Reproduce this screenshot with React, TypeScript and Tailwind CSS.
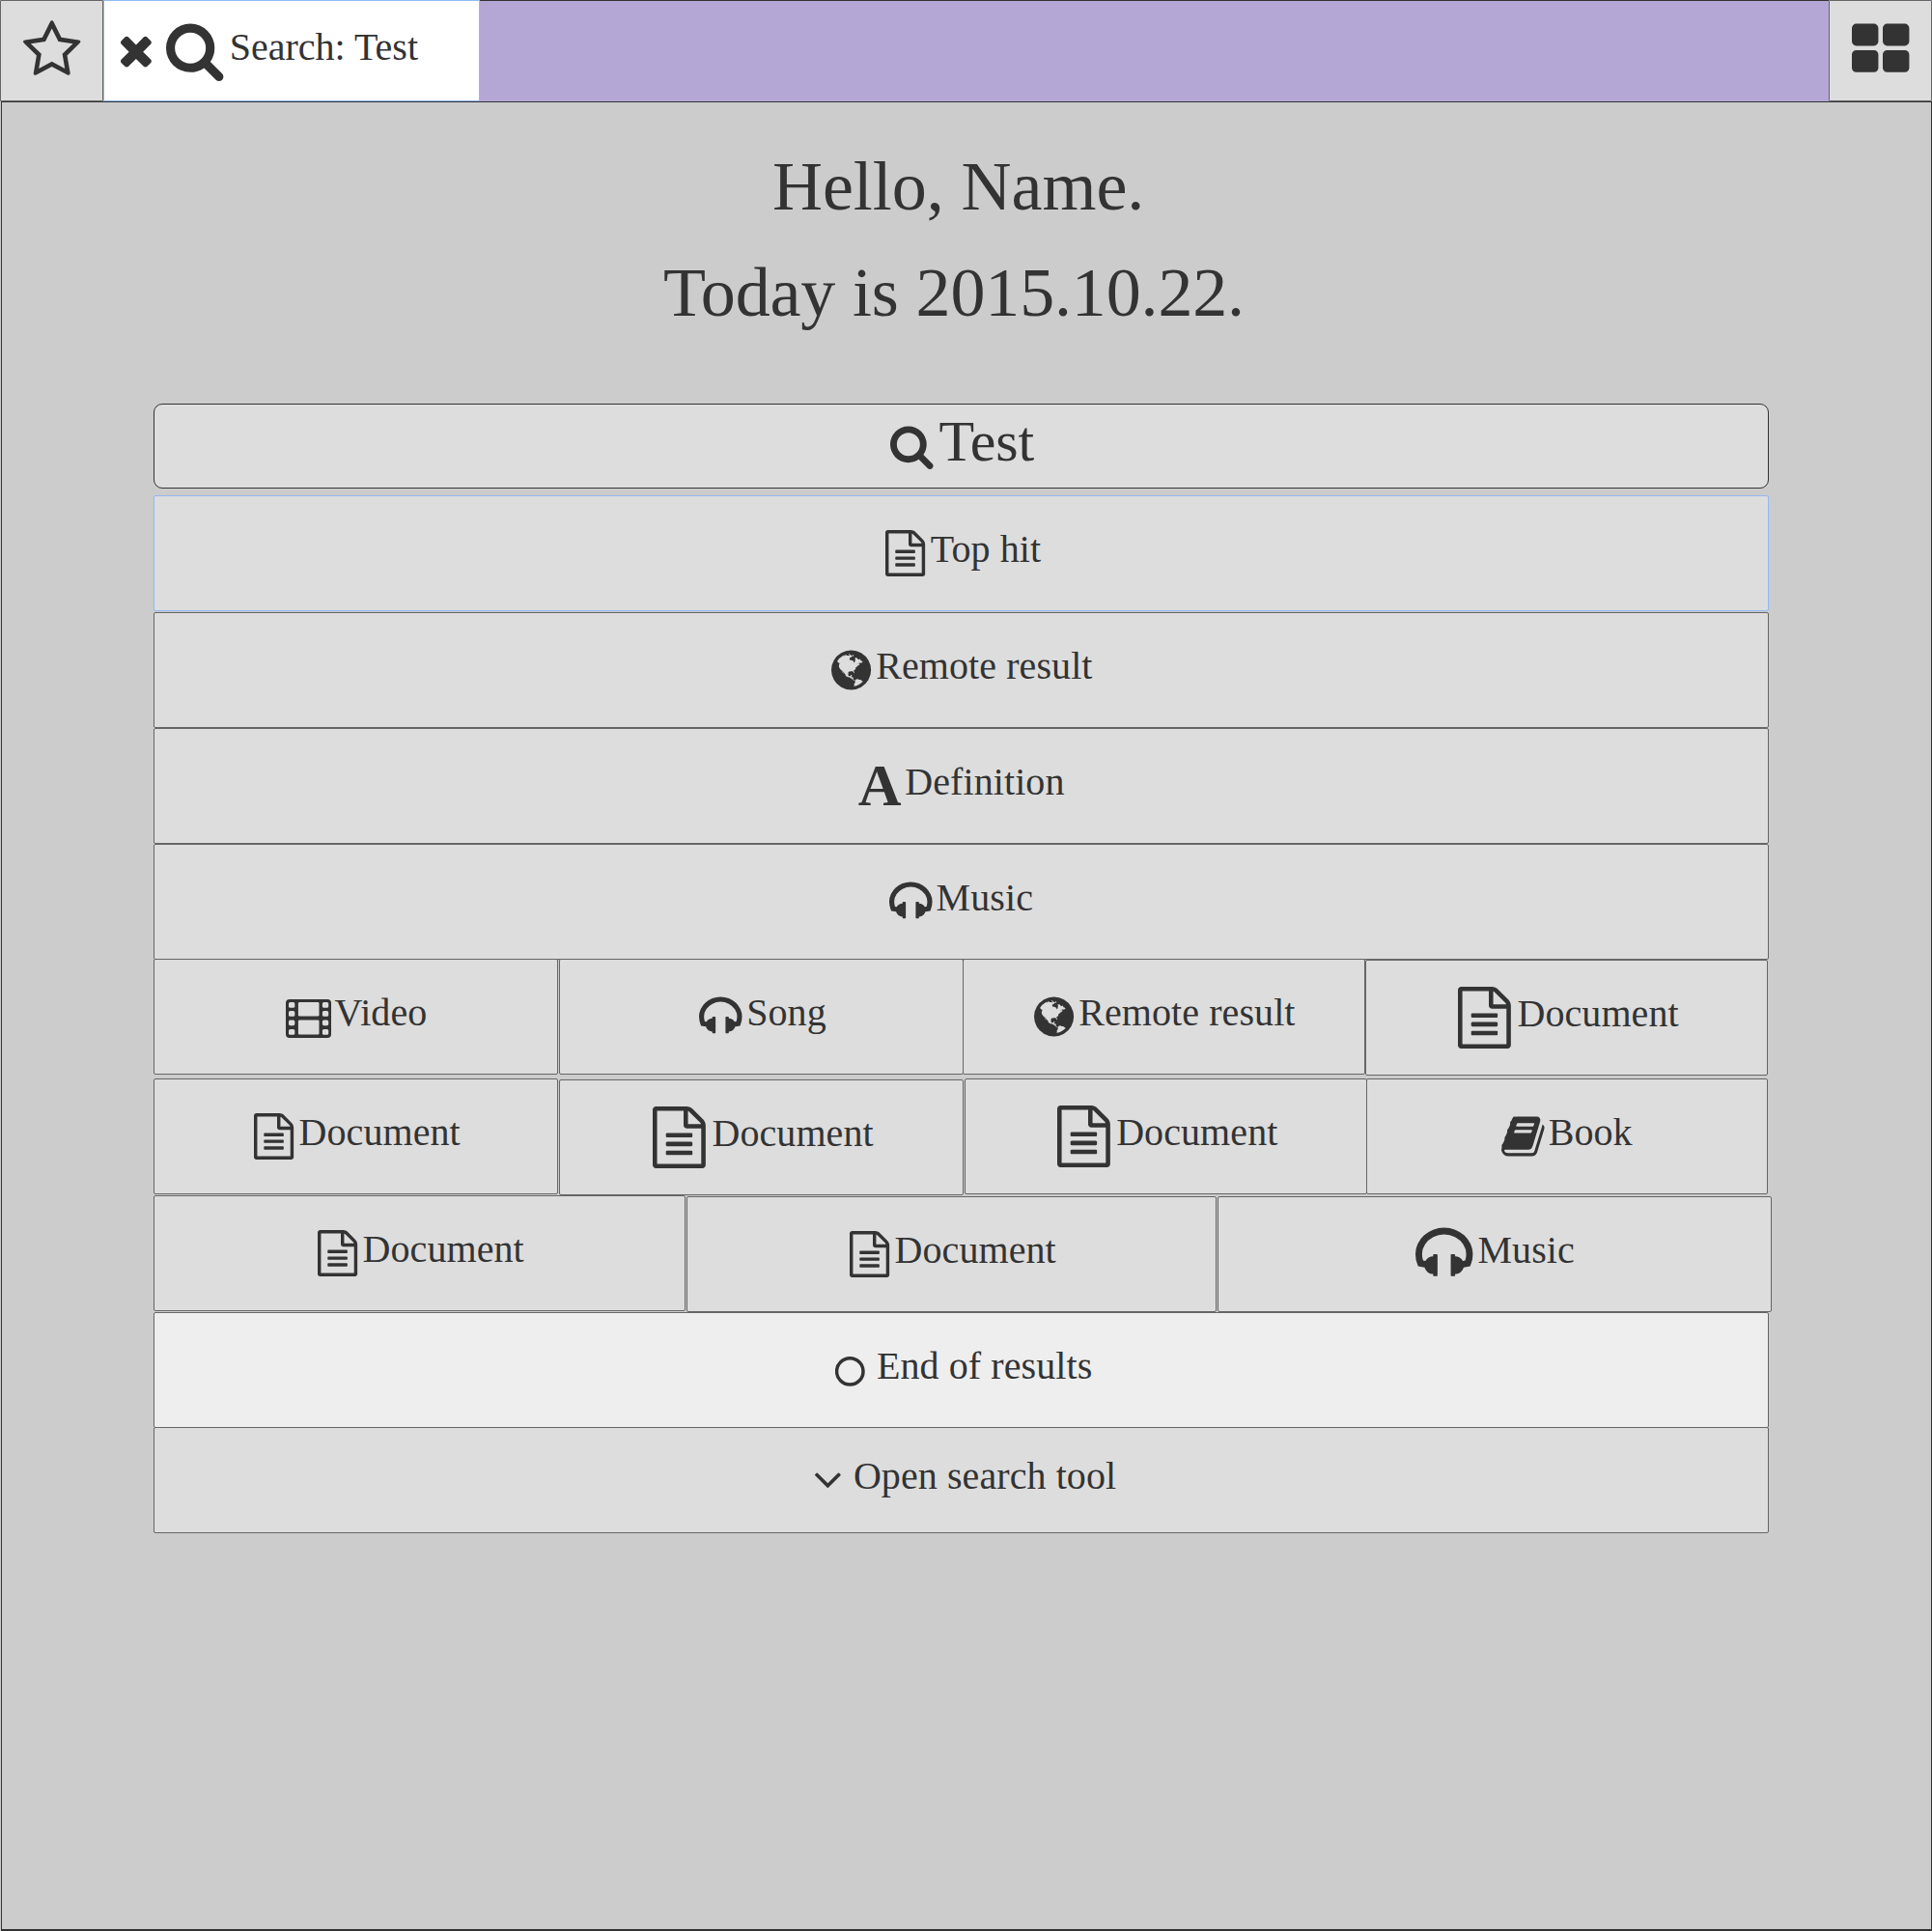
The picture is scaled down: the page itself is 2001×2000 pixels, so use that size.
import type { ReactNode } from "react";

type Glyph = { x: number; w: number; d: string };

const glyphs = {
  star: {
    x: 64,
    w: 1664,
    d: "M1201 1004l306-297-422-62-189-382-189 382-422 62 306 297-73 421 378-199 377 199zm527-357q0 22-26 48l-363 354 86 500q1 7 1 20 0 50-41 50-19 0-40-12l-449-236-449 236q-22 12-40 12-21 0-31.5-14.5t-10.5-35.5q0-6 2-20l86-500-364-354q-25-27-25-48 0-37 56-46l502-73 225-455q19-41 49-41t49 41l225 455 502 73q56 9 56 46z",
  },
  times: {
    x: 302,
    w: 1188,
    d: "M1490 1322q0 40-28 68l-136 136q-28 28-68 28t-68-28l-294-294-294 294q-28 28-68 28t-68-28l-136-136q-28-28-28-68t28-68l294-294-294-294q-28-28-28-68t28-68l136-136q28-28 68-28t68 28l294 294 294-294q28-28 68-28t68 28l136 136q28 28 28 68t-28 68l-294 294 294 294q28 28 28 68z",
  },
  search: {
    x: 64,
    w: 1664,
    d: "M1216 832q0-185-131.5-316.5t-316.5-131.5-316.5 131.5-131.5 316.5 131.5 316.5 316.5 131.5 316.5-131.5 131.5-316.5zm512 832q0 52-38 90t-90 38q-54 0-90-38l-343-342q-179 124-399 124-143 0-273.5-55.5t-225-150-150-225-55.5-273.5 55.5-273.5 150-225 225-150 273.5-55.5 273.5 55.5 225 150 150 225 55.5 273.5q0 220-124 399l343 343q37 37 37 90z",
  },
  tiles: {
    x: 64,
    w: 1664,
    d: "M832 1024v384q0 52-38 90t-90 38h-512q-52 0-90-38t-38-90v-384q0-52 38-90t90-38h512q52 0 90 38t38 90zm0-768v384q0 52-38 90t-90 38h-512q-52 0-90-38t-38-90v-384q0-52 38-90t90-38h512q52 0 90 38t38 90zm896 768v384q0 52-38 90t-90 38h-512q-52 0-90-38t-38-90v-384q0-52 38-90t90-38h512q52 0 90 38t38 90zm0-768v384q0 52-38 90t-90 38h-512q-52 0-90-38t-38-90v-384q0-52 38-90t90-38h512q52 0 90 38t38 90z",
  },
  doc: {
    x: 128,
    w: 1536,
    d: "M1596 380q28 28 48 76t20 88v1152q0 40-28 68t-68 28h-1344q-40 0-68-28t-28-68v-1600q0-40 28-68t68-28h896q40 0 88 20t76 48zm-444-244v376h376q-10-29-22-41l-313-313q-12-12-41-22zm384 1528v-1024h-416q-40 0-68-28t-28-68v-416h-768v1536h1280zm-1024-864q0-14 9-23t23-9h704q14 0 23 9t9 23v64q0 14-9 23t-23 9h-704q-14 0-23-9t-9-23v-64zm736 224q14 0 23 9t9 23v64q0 14-9 23t-23 9h-704q-14 0-23-9t-9-23v-64q0-14 9-23t23-9h704zm0 256q14 0 23 9t9 23v64q0 14-9 23t-23 9h-704q-14 0-23-9t-9-23v-64q0-14 9-23t23-9h704z",
  },
  headphones: {
    x: 64,
    w: 1664,
    d: "M1728 886q0 166-60 314l-20 49-185 33q-22 83-90.5 136.5t-156.5 53.5v32q0 14-9 23t-23 9h-64q-14 0-23-9t-9-23v-576q0-14 9-23t23-9h64q14 0 23 9t9 23v32q71 0 130 35.5t93 95.5l68-12q29-95 29-193 0-148-88-279t-236.5-209-315.5-78-315.5 78-236.5 209-88 279q0 98 29 193l68 12q34-60 93-95.5t130-35.5v-32q0-14 9-23t23-9h64q14 0 23 9t9 23v576q0 14-9 23t-23 9h-64q-14 0-23-9t-9-23v-32q-88 0-156.5-53.5t-90.5-136.5l-185-33-20-49q-60-148-60-314 0-151 67-291t179-242.5 266-163.5 320-61 320 61 266 163.5 179 242.5 67 291z",
  },
  book: {
    x: 63,
    w: 1667,
    d: "M1703 478q40 57 18 129l-275 906q-19 64-76.5 107.5t-122.5 43.5h-923q-77 0-148.5-53.5t-99.5-131.5q-24-67-2-127 0-4 3-27t4-37q1-8-3-21.5t-3-19.5q2-11 8-21t16.5-23.5 16.5-23.5q23-38 45-91.5t30-91.5q3-10 .5-30t-.5-28q3-11 17-28t17-23q21-36 42-92t25-90q1-9-2.5-32t.5-28q4-13 22-30.5t22-22.5q19-26 42.5-84.5t27.5-96.5q1-8-3-25.5t-2-26.5q2-8 9-18t18-23 17-21q8-12 16.5-30.5t15-35 16-36 19.5-32 26.5-23.5 36-11.5 47.5 5.5l-1 3q38-9 51-9h761q74 0 114 56t18 130l-274 906q-36 119-71.5 153.5t-128.5 34.5h-869q-27 0-38 15-11 16-1 43 24 70 144 70h923q29 0 56-15.5t35-41.5l300-987q7-22 5-57 38 15 59 43zm-1064 2q-4 13 2 22.5t20 9.5h608q13 0 25.5-9.5t16.5-22.5l21-64q4-13-2-22.5t-20-9.5h-608q-13 0-25.5 9.5t-16.5 22.5zm-83 256q-4 13 2 22.5t20 9.5h608q13 0 25.5-9.5t16.5-22.5l21-64q4-13-2-22.5t-20-9.5h-608q-13 0-25.5 9.5t-16.5 22.5z",
  },
  chevron: {
    x: 397,
    w: 998,
    d: "M1395 736q0 13-10 23l-466 466q-10 10-23 10t-23-10l-466-466q-10-10-10-23t10-23l50-50q10-10 23-10t23 10l393 393 393-393q10-10 23-10t23 10l50 50q10 10 10 23z",
  },
  globe: {
    x: 128,
    w: 1536,
    d: "M896 128q209 0 385.5 103t279.5 279.5 103 385.5-103 385.5-279.5 279.5-385.5 103-385.5-103-279.5-279.5-103-385.5 103-385.5 279.5-279.5 385.5-103zm274 521q-2 1-9.5 9.5t-13.5 9.5q2 0 4.5-5t5-11 3.5-7q6-7 22-15 14-6 52-12 34-8 51 11-2-2 9.5-13t14.5-12q3-2 15-4.5t15-7.5l2-22q-12 1-17.5-7t-6.5-21q0 2-6 8 0-7-4.5-8t-11.5 1-9 1q-10-3-15-7.5t-8-16.5-4-15q-2-5-9.5-11t-9.5-10q-1-2-2.5-5.5t-3-6.5-4-5.5-5.5-2.5-7 5-7.5 10-4.5 5q-3-2-6-1.5t-4.5 1-4.5 3-5 3.5q-3 2-8.5 3t-8.5 2q15-5-1-11-10-4-16-3 9-4 7.5-12t-8.5-14h5q-1-4-8.5-8.5t-17.5-8.5-13-6q-8-5-34-9.5t-33-.5q-5 6-4.5 10.5t4 14 3.5 12.5q1 6-5.5 13t-6.5 12q0 7 14 15.5t10 21.5q-3 8-16 16t-16 12q-5 8-1.5 18.5t10.5 16.5q2 2 1.5 4t-3.5 4.5-5.5 4-6.5 3.5l-3 2q-11 5-20.5-6t-13.5-26q-7-25-16-30-23-8-29 1-5-13-41-26-25-9-58-4 6-1 0-15-7-15-19-12 3-6 4-17.5t1-13.5q3-13 12-23 1-1 7-8.5t9.5-13.5.5-6q35 4 50-11 5-5 11.5-17t10.5-17q9-6 14-5.5t14.5 5.5 14.5 5q14 1 15.5-11t-7.5-20q12 1 3-17-4-7-8-9-12-4-27 5-8 4 2 8-1-1-9.5 10.5t-16.5 17.5-16-5q-1-1-5.5-13.5t-9.5-13.5q-8 0-16 15 3-8-11-15t-24-8q19-12-8-27-7-4-20.5-5t-19.5 4q-5 7-5.5 11.5t5 8 10.5 5.5 11.5 4 8.5 3q14 10 8 14-2 1-8.5 3.5t-11.5 4.5-6 4q-3 4 0 14t-2 14q-5-5-9-17.5t-7-16.5q7 9-25 6l-10-1q-4 0-16 2t-20.5 1-13.5-8q-4-8 0-20 1-4 4-2-4-3-11-9.5t-10-8.5q-46 15-94 41 6 1 12-1 5-2 13-6.5t10-5.5q34-14 42-7l5-5q14 16 20 25-7-4-30-1-20 6-22 12 7 12 5 18-4-3-11.5-10t-14.5-11-15-5q-16 0-22 1-146 80-235 222 7 7 12 8 4 1 5 9t2.5 11 11.5-3q9 8 3 19 1-1 44 27 19 17 21 21 3 11-10 18-1-2-9-9t-9-4q-3 5 .5 18.5t10.5 12.5q-7 0-9.5 16t-2.5 35.5-1 23.5l2 1q-3 12 5.5 34.5t21.5 19.5q-13 3 20 43 6 8 8 9 3 2 12 7.5t15 10 10 10.5q4 5 10 22.5t14 23.5q-2 6 9.5 20t10.5 23q-1 0-2.5 1t-2.5 1q3 7 15.5 14t15.5 13q1 3 2 10t3 11 8 2q2-20-24-62-15-25-17-29-3-5-5.5-15.5t-4.5-14.5q2 0 6 1.5t8.5 3.5 7.5 4 2 3q-3 7 2 17.5t12 18.5 17 19 12 13q6 6 14 19.5t0 13.5q9 0 20 10t17 20q5 8 8 26t5 24q2 7 8.5 13.5t12.5 9.5l16 8 13 7q5 2 18.5 10.5t21.5 11.5q10 4 16 4t14.5-2.5 13.5-3.5q15-2 29 15t21 21q36 19 55 11-2 1 .5 7.5t8 15.5 9 14.5 5.5 8.5q5 6 18 15t18 15q6-4 7-9-3 8 7 20t18 10q14-3 14-32-31 15-49-18 0-1-2.5-5.5t-4-8.5-2.5-8.5 0-7.5 5-3q9 0 10-3.5t-2-12.5-4-13q-1-8-11-20t-12-15q-5 9-16 8t-16-9q0 1-1.5 5.5t-1.5 6.5q-13 0-15-1 1-3 2.5-17.5t3.5-22.5q1-4 5.5-12t7.5-14.5 4-12.5-4.5-9.5-17.5-2.5q-19 1-26 20-1 3-3 10.5t-5 11.5-9 7q-7 3-24 2t-24-5q-13-8-22.5-29t-9.5-37q0-10 2.5-26.5t3-25-5.5-24.5q3-2 9-9.5t10-10.5q2-1 4.5-1.5t4.5 0 4-1.5 3-6q-1-1-4-3-3-3-4-3 7 3 28.5-1.5t27.5 1.5q15 11 22-2 0-1-2.5-9.5t-.5-13.5q5 27 29 9 3 3 15.5 5t17.5 5q3 2 7 5.5t5.5 4.5 5-.5 8.5-6.5q10 14 12 24 11 40 19 44 7 3 11 2t4.5-9.5 0-14-1.5-12.5l-1-8v-18l-1-8q-15-3-18.5-12t1.5-18.5 15-18.5q1-1 8-3.5t15.5-6.5 12.5-8q21-19 15-35 7 0 11-9-1 0-5-3t-7.5-5-4.5-2q9-5 2-16 5-3 7.5-11t7.5-10q9 12 21 2 7-8 1-16 5-7 20.5-10.5t18.5-9.5q7 2 8-2t1-12 3-12q4-5 15-9t13-5l17-11q3-4 0-4 18 2 31-11 10-11-6-20 3-6-3-9.5t-15-5.5q3-1 11.5-.5t10.5-1.5q15-10-7-16-17-5-43 12zm-163 877q206-36 351-189-3-3-12.5-4.5t-12.5-3.5q-18-7-24-8 1-7-2.5-13t-8-9-12.5-8-11-7q-2-2-7-6t-7-5.5-7.5-4.5-8.5-2-10 1l-3 1q-3 1-5.5 2.5t-5.5 3-4 3 0 2.5q-21-17-36-22-5-1-11-5.5t-10.5-7-10-1.5-11.5 7q-5 5-6 15t-2 13q-7-5 0-17.5t2-18.5q-3-6-10.5-4.5t-12 4.5-11.5 8.5-9 6.5-8.5 5.5-8.5 7.5q-3 4-6 12t-5 11q-2-4-11.5-6.5t-9.5-5.5q2 10 4 35t5 38q7 31-12 48-27 25-29 40-4 22 12 26 0 7-8 20.5t-7 21.5q0 6 2 16z",
  },
} satisfies Record<string, Glyph>;

function Icon({ name, large, className = "" }: { name: keyof typeof glyphs; large?: boolean; className?: string }) {
  const g: Glyph = glyphs[name];
  return (
    <svg
      viewBox={`${g.x} 0 ${g.w} 1792`}
      className={`${large ? "h-16" : "h-12"} w-auto shrink-0 overflow-visible ${className}`}
      fill="currentColor"
      aria-hidden="true"
    >
      <path d={g.d} />
    </svg>
  );
}

function FilmIcon() {
  const holes = [9, 18, 27.4, 37];
  return (
    <svg viewBox="0 0 47 48" className="h-12 w-[47px] shrink-0" aria-hidden="true">
      <rect x="0" y="6" width="47" height="40" rx="4" fill="currentColor" />
      <g fill="#dddddd">
        {holes.map((y) => (
          <rect key={y} x="3" y={y} width="6.3" height="5.8" rx="1.6" />
        ))}
        {holes.map((y) => (
          <rect key={y} x="37.9" y={y} width="6.3" height="5.8" rx="1.6" />
        ))}
        <rect x="12.9" y="9" width="21.6" height="14.6" rx="1.4" />
        <rect x="12.9" y="27.4" width="21.6" height="15.2" rx="1.4" />
      </g>
    </svg>
  );
}

function RingIcon() {
  return (
    <svg viewBox="0 0 31 48" className="h-12 w-[31px] shrink-0" aria-hidden="true">
      <circle cx="15.3" cy="25.4" r="13.7" fill="none" stroke="currentColor" strokeWidth="3.5" />
    </svg>
  );
}

function Cell({ icon, label, className }: { icon: ReactNode; label: string; className: string }) {
  return (
    <button
      className={`box-border flex shrink-0 items-center rounded-[2px] border text-left ${className}`}
    >
      {icon}
      <span className="pb-[8px] text-[40px] leading-10 tracking-[0.08px] whitespace-nowrap">{label}</span>
    </button>
  );
}

export default function App() {
  return (
    <div className="h-[2000px] w-[2001px] overflow-hidden bg-[#cccccc] font-['Liberation_Serif',serif] text-[#333333]">
      <header className="flex h-[105px] bg-[#b4a7d6]">
        <button className="flex w-[107px] items-center rounded-[1px] border border-[#666666] bg-[#dddddd] pb-[2px] pl-[23px]">
          <Icon name="star" large />
        </button>
        <div className="flex w-[390px] items-center border border-[#93b8f3] bg-white pb-[2px] pl-[17px]">
          <Icon name="times" />
          <Icon name="search" large className="ml-[15px]" />
          <span className="ml-[6.5px] pb-[6px] text-[40px] leading-10 whitespace-nowrap">Search: Test</span>
        </div>
        <div className="flex-1 border-t border-[#333333]" />
        <button className="flex w-[107px] items-center rounded-[1px] border border-[#666666] bg-[#dddddd] pb-[2px] pl-[23px]">
          <Icon name="tiles" large />
        </button>
      </header>

      <main className="ml-px h-[1895px] w-[2000px] border border-b-2 border-[#333333]">
        <h1 className="pt-[47px] pl-[798px] text-[72px] leading-[110px] whitespace-nowrap">
          <span className="block -mt-[15px] tracking-[-0.05px]">Hello, Name.</span>
          <span className="block -ml-[113px] tracking-[-0.15px]">Today is 2015.10.22.</span>
        </h1>

        <section className="mt-[60px] ml-[157px] flex w-[1673px] flex-col">
          <div className="flex h-[88px] items-center rounded-[9px] border border-[#333333] bg-[#dddddd] pl-[762px]">
            <Icon name="search" />
            <span className="ml-[6px] pb-[10px] text-[60px] leading-[60px] tracking-[-0.2px]">Test</span>
          </div>

          <Cell icon={<Icon name="doc" />} label="Top hit" className="mt-[7px] h-[120px] gap-[6px] border-[#93b8f3] bg-[#dddddd] pl-[756.6px]" />
          <Cell icon={<Icon name="globe" />} label="Remote result" className="mt-px h-[120px] gap-[5.5px] border-[#666666] bg-[#dddddd] pl-[700.6px]" />
          <Cell
            icon={<span className="w-[45px] pb-[3px] text-[62px] leading-[62px] font-bold">A</span>}
            label="Definition"
            className="h-[120px] gap-[3.5px] border-[#666666] bg-[#dddddd] pl-[728.8px]"
          />
          <Cell icon={<Icon name="headphones" />} label="Music" className="h-[120px] gap-[4px] border-[#666666] bg-[#dddddd] pl-[761px]" />

          <div className="-mt-px flex h-[120px]">
            <Cell icon={<FilmIcon />} label="Video" className="h-[120px] w-[419px] gap-[4px] border-[#666666] bg-[#dddddd] pl-[135.6px]" />
            <Cell icon={<Icon name="headphones" />} label="Song" className="ml-px h-[120px] w-[419px] gap-[4.6px] border-[#666666] bg-[#dddddd] pl-[144px]" />
            <Cell icon={<Icon name="globe" />} label="Remote result" className="-ml-px h-[120px] w-[417px] gap-[5.5px] border-[#666666] bg-[#dddddd] pl-[72.6px]" />
            <Cell icon={<Icon name="doc" large />} label="Document" className="mt-px h-[120px] w-[417px] gap-[7px] border-[#666666] bg-[#dddddd] pl-[94.6px]" />
          </div>

          <div className="mt-[4px] flex h-[120px]">
            <Cell icon={<Icon name="doc" />} label="Document" className="h-[120px] w-[419px] gap-[5.8px] border-[#666666] bg-[#dddddd] pl-[102.6px]" />
            <Cell icon={<Icon name="doc" large />} label="Document" className="mt-px ml-px h-[120px] w-[419px] gap-[6.8px] border-[#666666] bg-[#dddddd] pl-[95.8px]" />
            <Cell icon={<Icon name="doc" large />} label="Document" className="ml-px h-[120px] w-[417px] gap-[6.8px] border-[#666666] bg-[#dddddd] pl-[94.5px]" />
            <Cell icon={<Icon name="book" />} label="Book" className="-ml-px h-[120px] w-[416px] gap-[4px] border-[#666666] bg-[#dddddd] pl-[139px]" />
          </div>

          <div className="mt-px flex h-[120px]">
            <Cell icon={<Icon name="doc" />} label="Document" className="h-[120px] w-[551px] gap-[5.8px] border-[#666666] bg-[#dddddd] pl-[168.6px]" />
            <Cell icon={<Icon name="doc" />} label="Document" className="mt-px ml-px h-[120px] w-[549px] gap-[5.6px] border-[#666666] bg-[#dddddd] pl-[167.8px]" />
            <Cell icon={<Icon name="headphones" large />} label="Music" className="mt-px ml-px h-[120px] w-[574px] gap-[5px] border-[#666666] bg-[#dddddd] pl-[204px]" />
          </div>

          <Cell icon={<RingIcon />} label="End of results" className="mt-px h-[120px] gap-[12px] border-[#666666] bg-[#eeeeee] pl-[705px]" />
          <Cell icon={<Icon name="chevron" className="relative -top-px" />} label="Open search tool" className="-mt-px h-[110px] gap-[13.6px] border-[#666666] bg-[#dddddd] pl-[683.6px]" />
        </section>
      </main>
    </div>
  );
}
